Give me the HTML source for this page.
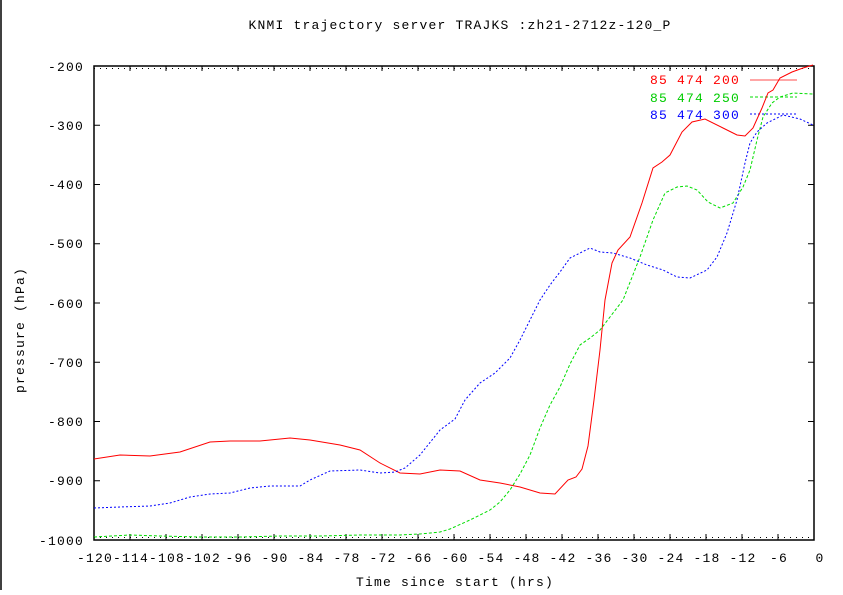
<!DOCTYPE html>
<html><head><style>
html,body{margin:0;padding:0;background:#fff;}
svg text{font-family:"Liberation Mono",monospace;font-size:13px;letter-spacing:1.2px;}
</style></head><body>
<svg width="843" height="590" xmlns="http://www.w3.org/2000/svg">
<line x1="1" y1="0" x2="1" y2="590" stroke="#000" stroke-width="1.5"/>
<text x="460" y="29" text-anchor="middle">KNMI trajectory server TRAJKS :zh21-2712z-120_P</text>
<rect x="94" y="66" width="720" height="474" fill="none" stroke="#000" stroke-width="1.5"/>
<g stroke="#000" stroke-width="1">
<path d="M94 125.25h6M94 184.5h6M94 243.75h6M94 303h6M94 362.25h6M94 421.5h6M94 480.75h6M814 125.25h-6M814 184.5h-6M814 243.75h-6M814 303h-6M814 362.25h-6M814 421.5h-6M814 480.75h-6"/>
<path d="M130 66v5M166 66v5M202 66v5M238 66v5M274 66v5M310 66v5M346 66v5M382 66v5M418 66v5M454 66v5M490 66v5M526 66v5M562 66v5M598 66v5M634 66v5M670 66v5M706 66v5M742 66v5M778 66v5M130 540v-6M166 540v-6M202 540v-6M238 540v-6M274 540v-6M310 540v-6M346 540v-6M382 540v-6M418 540v-6M454 540v-6M490 540v-6M526 540v-6M562 540v-6M598 540v-6M634 540v-6M670 540v-6M706 540v-6M742 540v-6M778 540v-6"/>
</g>
<g stroke="#000" stroke-width="1" stroke-dasharray="1 5" stroke-dashoffset="-6">
<line x1="94" y1="68.5" x2="814" y2="68.5"/>
<line x1="94" y1="537.5" x2="814" y2="537.5"/>
</g>
<g text-anchor="end">
<text x="84" y="71">-200</text><text x="84" y="130">-300</text><text x="84" y="189">-400</text><text x="84" y="248">-500</text><text x="84" y="308">-600</text><text x="84" y="367">-700</text><text x="84" y="426">-800</text><text x="84" y="485">-900</text><text x="84" y="545">-1000</text>
</g>
<g text-anchor="middle">
<text x="95" y="562">-120</text><text x="131" y="562">-114</text><text x="167" y="562">-108</text><text x="203" y="562">-102</text><text x="239" y="562">-96</text><text x="275" y="562">-90</text><text x="311" y="562">-84</text><text x="347" y="562">-78</text><text x="383" y="562">-72</text><text x="419" y="562">-66</text><text x="455" y="562">-60</text><text x="491" y="562">-54</text><text x="527" y="562">-48</text><text x="563" y="562">-42</text><text x="599" y="562">-36</text><text x="635" y="562">-30</text><text x="671" y="562">-24</text><text x="707" y="562">-18</text><text x="743" y="562">-12</text><text x="779" y="562">-6</text><text x="820" y="562">0</text>
<text x="455" y="586">Time since start (hrs)</text>
<text transform="translate(24 330) rotate(-90)">pressure (hPa)</text>
</g>
<g text-anchor="end">
<text x="740" y="84" fill="#f00">85 474 200</text>
<text x="740" y="102" fill="#0c0">85 474 250</text>
<text x="740" y="119" fill="#00f">85 474 300</text>
</g>
<line x1="750" y1="80" x2="797" y2="80" stroke="#f88" stroke-width="1.5"/>
<line x1="750" y1="97" x2="797" y2="97" stroke="#0d0" stroke-dasharray="3 2"/>
<line x1="750" y1="114" x2="797" y2="114" stroke="#00f" stroke-dasharray="2 2"/>
<polyline fill="none" stroke="#f00" points="94,459 120,455 150,456 180,452 210,442 230,441 260,441 290,438 310,440 340,445 360,450 380,463 400,473 420,474 440,470 460,471 480,480 500,483 520,487 540,493 555,494 568,480 576,477 582,469 588,446 594,400 600,350 605,300 612,263 618,250 630,237 642,203 653,168 662,162 670,155 682,132 692,122 705,119 723,128 737,135 745,136 753,128 762,108 768,93 773,90 780,78 792,72 803,68 813,65"/>
<polyline fill="none" stroke="#0d0" stroke-dasharray="3 2" points="94,537 130,535 160,536 200,537 240,537 280,536 320,536 360,535 400,535 420,534 440,532 450,529 470,520 490,510 500,502 510,490 520,474 530,455 540,428 550,405 560,387 570,364 580,345 590,338 600,330 610,317 623,300 640,257 653,220 665,193 677,187 687,186 697,190 708,202 720,208 733,203 743,187 750,170 757,140 763,117 772,103 780,97 793,93 813,94"/>
<polyline fill="none" stroke="#00f" stroke-dasharray="2 2" points="94,508 120,507 150,506 170,503 190,497 210,494 230,493 250,488 270,486 300,486 310,480 330,471 360,470 380,473 395,472 405,468 420,455 440,430 455,419 465,400 480,383 495,373 510,358 520,340 530,320 540,300 550,285 560,272 570,258 580,253 590,248 600,252 613,253 630,258 647,265 663,270 677,277 690,278 707,270 717,257 727,233 737,200 745,163 750,143 757,132 767,123 783,115 800,119 813,125"/>
</svg>
</body></html>
